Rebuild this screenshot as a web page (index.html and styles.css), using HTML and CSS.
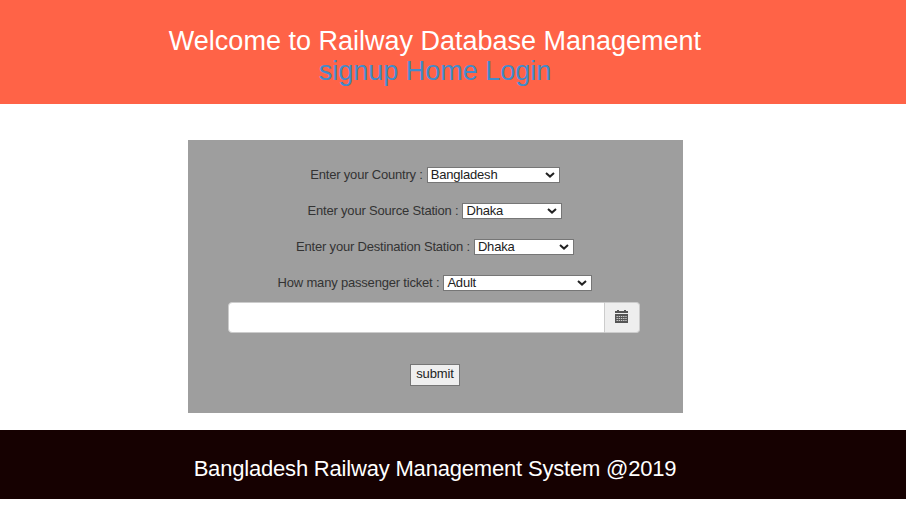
FILE: index.html
```
<!DOCTYPE html>
<html lang="en">
<head>
<meta charset="utf-8">
<title>Railway Database Management</title>
<link rel="stylesheet" href="styles.css">
</head>
<body>
<header class="banner">
  <h1 class="title">Welcome to Railway Database Management</h1>
  <nav class="links"><a href="#">signup</a> <a href="#">Home</a> <a href="#">Login</a></nav>
</header>
<form class="panel">
  <div class="row"><label for="country">Enter your Country :</label> <span class="pick"><select id="country" class="w-country"><option>Bangladesh</option></select><svg class="chev" viewBox="0 0 10 6"><path d="M1 1l4 3.6L9 1"/></svg></span></div>
  <div class="row"><label for="source">Enter your Source Station :</label> <span class="pick"><select id="source" class="w-station"><option>Dhaka</option></select><svg class="chev" viewBox="0 0 10 6"><path d="M1 1l4 3.6L9 1"/></svg></span></div>
  <div class="row"><label for="dest">Enter your Destination Station :</label> <span class="pick"><select id="dest" class="w-station"><option>Dhaka</option></select><svg class="chev" viewBox="0 0 10 6"><path d="M1 1l4 3.6L9 1"/></svg></span></div>
  <div class="row"><label for="ticket">How many passenger ticket :</label> <span class="pick"><select id="ticket" class="w-ticket"><option>Adult</option></select><svg class="chev" viewBox="0 0 10 6"><path d="M1 1l4 3.6L9 1"/></svg></span></div>
  <div class="date">
    <input type="text" class="date-input">
    <span class="date-addon"><svg class="calendar" viewBox="0 0 13 13"><path d="M2 0h2v1h5V0h2v1h2v2H0V1h2zM0 4h13v9H0z"/><path class="cells" d="M1.5 6.5h11M1.5 8.5h11M1.5 10.5h11"/></svg></span>
  </div>
  <button type="button" class="submit">submit</button>
</form>
<footer class="footer">Bangladesh Railway Management System @2019</footer>
</body>
</html>
```
FILE: styles.css
```
* { box-sizing: border-box; }
body {
  margin: 0;
  background: #fff;
  color: #333;
  font: 13px/18px "Liberation Sans", Arial, sans-serif;
}
.banner {
  height: 104px;
  padding: 26px 36px 0 0;
  background: #ff6347;
  color: #fff;
  text-align: center;
  font-size: 27px;
  line-height: 30px;
}
.title { margin: 0; font-size: inherit; font-weight: 400; }
.links a { color: #428bca; text-decoration: none; }
.panel {
  display: flex;
  flex-direction: column;
  align-items: center;
  width: 495px;
  height: 273px;
  margin: 36px 0 17px 188px;
  padding: 26px 41px 0 40px;
  background: #9e9e9e;
}
.row {
  display: flex;
  align-items: center;
  gap: 4px;
  height: 18px;
  margin-bottom: 18px;
  white-space: nowrap;
  letter-spacing: -0.19px;
}
.pick { position: relative; display: flex; }
select {
  appearance: none;
  height: 16px;
  padding: 0 3px;
  border: 1px solid #767676;
  border-radius: 0;
  background: #fff;
  color: #222;
  font: 13px/14px "Liberation Sans", Arial, sans-serif;
  letter-spacing: -0.2px;
}
.w-country { width: 133px; }
.w-station { width: 100px; }
.w-ticket { width: 149px; }
.chev {
  position: absolute;
  right: 5px;
  top: 5px;
  width: 10px;
  height: 6px;
  fill: none;
  stroke: #222;
  stroke-width: 2;
}
.date {
  display: flex;
  width: 412px;
  height: 31px;
  margin: -8px 0 31px;
  align-self: flex-start;
}
.date-input {
  flex: 1;
  min-width: 0;
  border: 1px solid #ccc;
  border-radius: 4px 0 0 4px;
  background: #fff;
}
.date-addon {
  display: flex;
  align-items: center;
  justify-content: center;
  width: 35px;
  padding: 0 2px 2px 0;
  border: 1px solid #ccc;
  border-left: 0;
  border-radius: 0 4px 4px 0;
  background: #eee;
}
.calendar { width: 13px; height: 13px; fill: #555; }
.cells { stroke: #ccc; stroke-width: 1; stroke-dasharray: 1.4 .8; }
.submit {
  width: 50px;
  height: 22px;
  padding: 0 0 2px;
  border: 1px solid #767676;
  background: #efefef;
  color: #222;
  font: 13px/18px "Liberation Sans", Arial, sans-serif;
  letter-spacing: -0.1px;
}
.footer {
  height: 69px;
  padding: 24px 36px 0 0;
  background: #160101;
  color: #fff;
  text-align: center;
  font-size: 22px;
  line-height: 30px;
  letter-spacing: -0.19px;
}
```
